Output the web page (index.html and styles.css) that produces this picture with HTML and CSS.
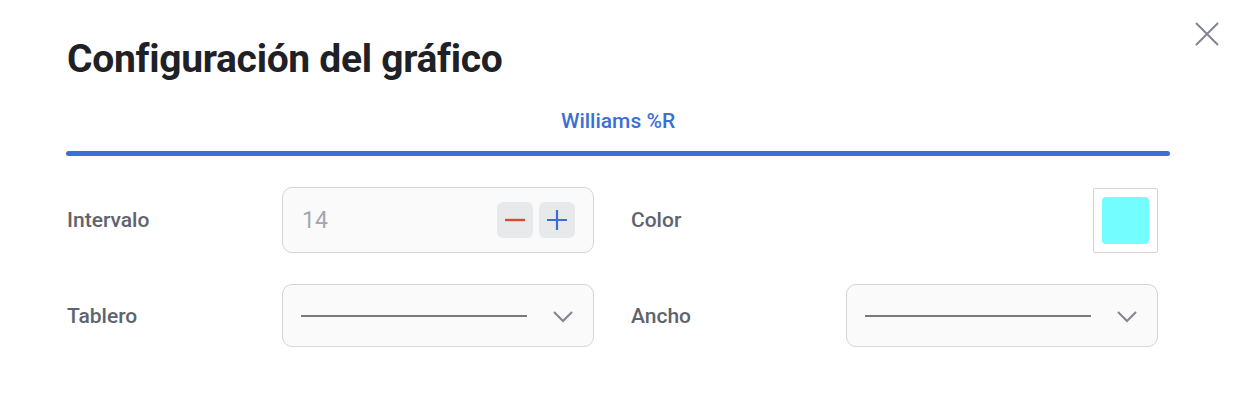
FILE: index.html
```html
<!DOCTYPE html>
<html lang="es">
<head>
<meta charset="utf-8">
<link rel="stylesheet" href="styles.css">
</head>
<body>
<div class="modal">
  <button class="close" aria-label="Cerrar">
    <svg width="24" height="24" viewBox="0 0 24 24"><path d="M1 1L23 23M23 1L1 23" stroke="#80858f" stroke-width="2" fill="none"/></svg>
  </button>
  <h1 class="title">Configuración del gráfico</h1>
  <div class="tabs">
    <div class="tab">Williams %R</div>
    <div class="tab-bar"></div>
  </div>
  <div class="fields">
    <div class="field">
      <div class="label">Intervalo</div>
      <div class="box stepper">
        <span class="value">14</span>
        <div class="btns">
          <button class="step"><svg width="20" height="20" viewBox="0 0 20 20"><path d="M0 10H20" stroke="#d24f2e" stroke-width="2.4"/></svg></button>
          <button class="step"><svg width="20" height="20" viewBox="0 0 20 20"><path d="M0 10H20M10 0V20" stroke="#3d6fd2" stroke-width="2.2"/></svg></button>
        </div>
      </div>
    </div>
    <div class="field">
      <div class="label">Color</div>
      <div class="color-cell"><div class="color-box"><div class="swatch"></div></div></div>
    </div>
    <div class="field short">
      <div class="label">Tablero</div>
      <div class="box select">
        <span class="line"></span>
        <svg class="chev" width="20" height="12" viewBox="0 0 20 12"><path d="M1 1L10 10L19 1" stroke="#80858f" stroke-width="2" fill="none"/></svg>
      </div>
    </div>
    <div class="field short">
      <div class="label">Ancho</div>
      <div class="box select">
        <span class="line"></span>
        <svg class="chev" width="20" height="12" viewBox="0 0 20 12"><path d="M1 1L10 10L19 1" stroke="#80858f" stroke-width="2" fill="none"/></svg>
      </div>
    </div>
  </div>
</div>
</body>
</html>
```

FILE: styles.css
```css
* { box-sizing: border-box; }
html, body { margin: 0; padding: 0; background: #fff; }
body { font-family: Roboto, "Noto Sans", sans-serif; }
.modal {
  position: relative;
  width: 1244px;
  height: 400px;
  padding: 34px 74px 0 66px;
}
.close {
  position: absolute;
  top: 22px;
  left: 1195px;
  width: 24px;
  height: 24px;
  padding: 0;
  border: 0;
  background: none;
}
.close svg { display: block; }
.title {
  margin: 0 0 0 1px;
  font-size: 39px;
  line-height: 50px;
  font-weight: 700;
  color: #1f2126;
  letter-spacing: -0.3px;
}
.tabs {
  margin-top: 26px;
  display: flex;
  flex-direction: column;
  align-items: center;
}
.tab {
  font-size: 21px;
  font-weight: 500;
  color: #3b6fd5;
  line-height: 22px;
  height: 41px;
}
.tab-bar {
  width: 100%;
  height: 5px;
  border-radius: 3px;
  background: #3b6fd5;
}
.fields {
  margin-top: 31px;
  margin-left: 1px;
  display: grid;
  grid-template-columns: 527px 527px;
  column-gap: 37px;
  row-gap: 31px;
}
.field {
  display: grid;
  grid-template-columns: 215px 312px;
  align-items: center;
  height: 66px;
}
.field.short { height: 63px; }
.label {
  font-size: 21px;
  font-weight: 500;
  color: #5e636d;
}
.box {
  height: 100%;
  border: 1px solid #d4d5d8;
  border-radius: 10px;
  background: #fafafa;
  display: flex;
  align-items: center;
  justify-content: space-between;
}
.stepper { padding: 0 18px 0 19px; }
.value {
  font-size: 23px;
  color: #a3a7ae;
}
.btns { display: flex; gap: 6px; }
.step {
  width: 36px;
  height: 36px;
  border: 0;
  border-radius: 6px;
  background: #e8e9eb;
  padding: 0;
  display: flex;
  align-items: center;
  justify-content: center;
}
.step svg { display: block; }
.color-cell { display: flex; justify-content: flex-end; }
.color-box {
  width: 65px;
  height: 65px;
  border: 1px solid #d4d5d8;
  border-radius: 2px;
  padding: 8px;
  background: #fff;
}
.swatch {
  width: 100%;
  height: 100%;
  border-radius: 4px;
  background: #74fdfe;
}
.select { padding: 0 20px 0 18px; }
.line {
  display: block;
  width: 226px;
  height: 2px;
  background: #7a7a7a;
}
.chev { display: block; margin-top: 2px; }
```
